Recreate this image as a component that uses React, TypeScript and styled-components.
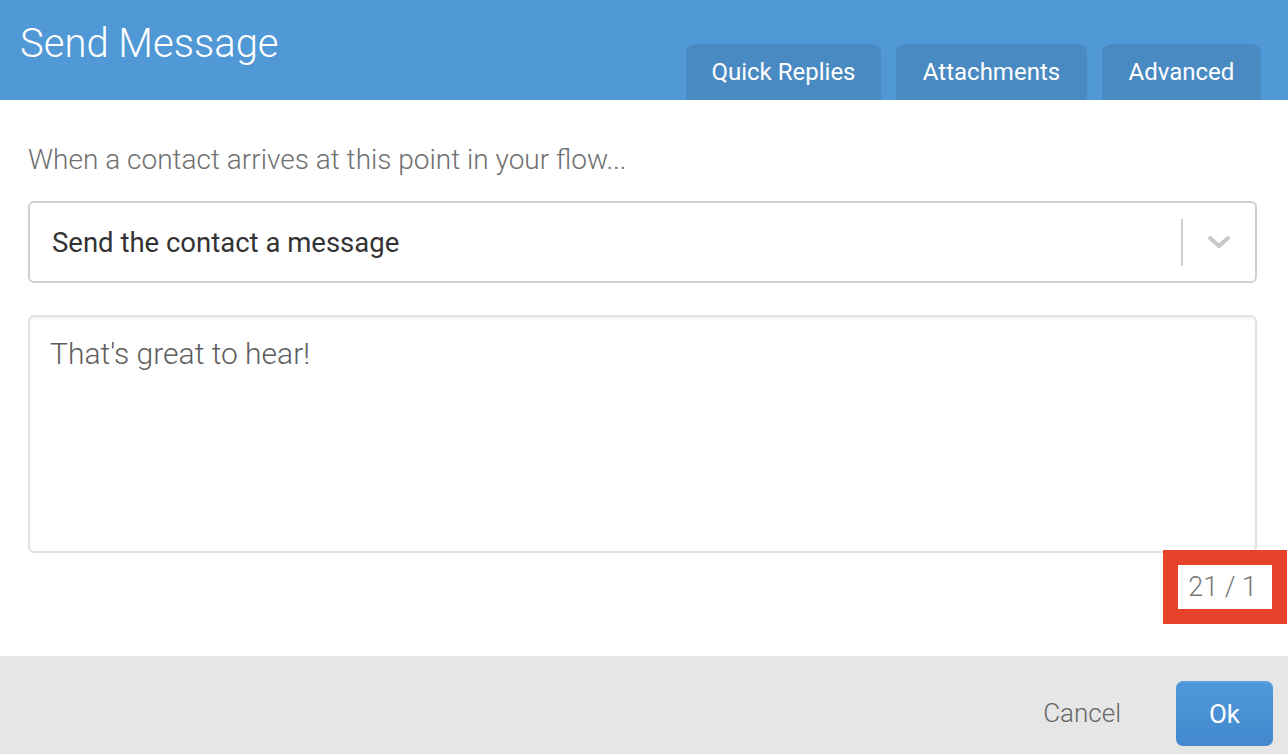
import React from "react"
import styled, { createGlobalStyle } from "styled-components"

const GlobalStyle = createGlobalStyle`
  html, body {
    margin: 0;
    padding: 0;
    background: #ffffff;
    font-family: Roboto, "Liberation Sans", sans-serif;
  }
  * { box-sizing: border-box; }
`

const Dialog = styled.div`
  width: 1288px;
  height: 754px;
  display: flex;
  flex-direction: column;
  overflow: hidden;
`

const Header = styled.div`
  height: 100px;
  background: #5098d6;
  display: flex;
  justify-content: space-between;
  align-items: flex-start;
  padding: 0 27px 0 20px;
`

const Title = styled.h1`
  margin: 0;
  padding-top: 21px;
  font-size: 40px;
  font-weight: 300;
  color: #ffffff;
  line-height: 46px;
`

const Tabs = styled.div`
  display: flex;
  gap: 15px;
  align-self: flex-end;
`

const Tab = styled.div<{ $w: number }>`
  width: ${p => p.$w}px;
  height: 56px;
  background: #4a8ac2;
  border-radius: 9px 9px 0 0;
  color: #ffffff;
  font-size: 24px;
  font-weight: 400;
  display: flex;
  align-items: center;
  justify-content: center;
`

const Body = styled.div`
  flex: 1;
  padding: 38px 31px 0 28px;
  display: flex;
  flex-direction: column;
`

const Intro = styled.div`
  font-size: 28px;
  font-weight: 300;
  color: #707070;
  line-height: 44px;
  margin-bottom: 19px;
`

const Select = styled.div`
  height: 82px;
  border: 2px solid #d0d0d0;
  border-radius: 6px;
  display: flex;
  align-items: center;
  padding-left: 22px;
`

const SelectValue = styled.div`
  flex: 1;
  font-size: 27.5px;
  font-weight: 400;
  color: #333333;
`

const Divider = styled.div`
  width: 2px;
  height: 47px;
  background: #cccccc;
`

const Chevron = styled.div`
  width: 72px;
  display: flex;
  justify-content: center;
  align-items: center;
`

const MessageBox = styled.div`
  margin-top: 32px;
  height: 238px;
  border: 2px solid #e2e2e2;
  border-radius: 6px;
  box-shadow: inset 0 2px 3px rgba(0, 0, 0, 0.06);
  padding: 20px 20px;
  font-size: 30px;
  font-weight: 300;
  color: #5e5e5e;
  line-height: 34px;
`

const CounterRow = styled.div`
  display: flex;
  justify-content: flex-end;
  margin-top: 12px;
  margin-right: -15px;
`

const Counter = styled.div`
  width: 94px;
  height: 44px;
  background: #ffffff;
  outline: 15px solid #e8432a;
  display: flex;
  align-items: center;
  justify-content: flex-end;
  padding-right: 15px;
  font-size: 27px;
  font-weight: 300;
  color: #777777;
`

const Footer = styled.div`
  height: 98px;
  background: #e6e6e6;
  display: flex;
  align-items: center;
  justify-content: flex-end;
  padding-right: 15px;
  gap: 55px;
`

const CancelButton = styled.div`
  font-size: 26px;
  font-weight: 300;
  color: #666666;
  margin-top: 16px;
`

const OkButton = styled.div`
  width: 97px;
  height: 65px;
  margin-top: 16px;
  border-radius: 7px;
  background: linear-gradient(180deg, #4f98da, #4388cd);
  border-top: 2px solid #5a9fdc;
  color: #ffffff;
  font-size: 26px;
  display: flex;
  align-items: center;
  justify-content: center;
`

export default function App() {
  return (
    <>
      <GlobalStyle />
      <Dialog>
        <Header>
          <Title>Send Message</Title>
          <Tabs>
            <Tab $w={195}>Quick Replies</Tab>
            <Tab $w={191}>Attachments</Tab>
            <Tab $w={159}>Advanced</Tab>
          </Tabs>
        </Header>
        <Body>
          <Intro>When a contact arrives at this point in your flow...</Intro>
          <Select>
            <SelectValue>Send the contact a message</SelectValue>
            <Divider />
            <Chevron>
              <svg width="24" height="16" viewBox="0 0 24 16">
                <path d="M3 4 L12 12 L21 4" fill="none" stroke="#c8c8c8" strokeWidth="4" strokeLinecap="round" strokeLinejoin="round" />
              </svg>
            </Chevron>
          </Select>
          <MessageBox>That's great to hear!</MessageBox>
          <CounterRow>
            <Counter>21 / 1</Counter>
          </CounterRow>
        </Body>
        <Footer>
          <CancelButton>Cancel</CancelButton>
          <OkButton>Ok</OkButton>
        </Footer>
      </Dialog>
    </>
  )
}
